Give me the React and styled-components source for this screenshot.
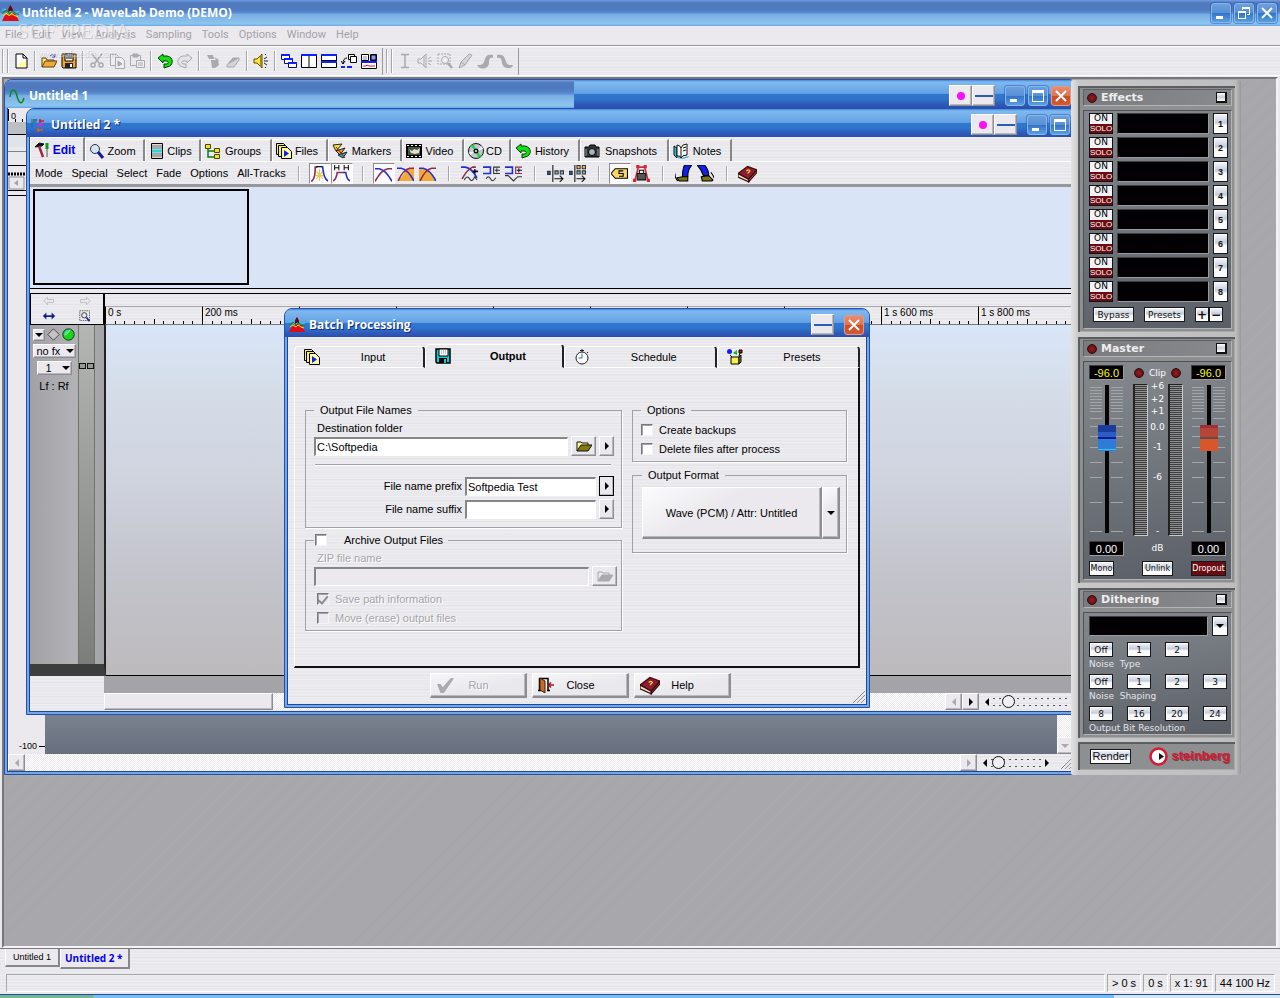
import styled, { createGlobalStyle, css } from "styled-components";

const GlobalStyle = createGlobalStyle`
    * { box-sizing: border-box; }

    html, body { margin: 0; }

    body {
        background: #ebe9ed;
        font-family: "Liberation Sans", Arial, sans-serif;
        font-size: 11px;
        line-height: 16px;
        color: #000;
    }

    button, input, select {
        font: inherit;
        color: inherit;
        margin: 0;
    }

    svg { display: block; flex: none; }
`;

const brushed = css`
    background-color: #e9e8ec;
    background-image:
        repeating-linear-gradient(0deg, rgba(255, 255, 255, 0.22) 0 1px, transparent 1px 3px),
        repeating-linear-gradient(0deg, rgba(190, 195, 210, 0.12) 0 1px, transparent 1px 7px);
`;

const activeBar = css`
    background: linear-gradient(#4a86da 0, #7cbaee 2px, #78b2ec 20%, #64a2e6 48%, #3078cc 50%, #2e74cc 68%, #2f58b8 88%, #2b50ac 100%);
`;

const inactiveBar = css`
    background: linear-gradient(#6f9ee0 0, #5078bc 3px, #507cc2 40%, #5a92d6 50%, #7aaee4 56%, #8cc6ee 92%, #6ba4e4 100%);
`;

const raised = css`
    border: 1px solid;
    border-color: #fff #8d8d92 #8d8d92 #fff;
    box-shadow: inset -1px -1px 0 #b9b8bd;
`;

const hatch = css`
    background: repeating-conic-gradient(#fff 0 25%, #ebe9ed 0 50%) 0 0 / 2px 2px;
`;

/* ---------- icons ---------- */

const G = "#a9a9ae";

const icons = {
    logo: <>
        <path d="M0 15L3 9L6 7V3L8 0L10 4V7L13 9L16 15Z" fill="#e00c1c" />
        <path d="M6 4L8 0L10 4V6H6Z" fill="#5c0a10" />
        <path d="M0 5L3 4L6 8L8 6L11 7L16 6" stroke="#2ce0e0" fill="none" />
        <path d="M0 8L4 5L7 8L10 6L13 8L16 9" stroke="#18803c" fill="none" />
        <path d="M1 10L4 8L7 10L9 8L12 10L15 11" stroke="#ffe000" fill="none" />
    </>,
    sine: <path d="M1 9C2 0 6 0 8 8S13 17 15 10" stroke="#0a8a1c" strokeWidth="1.5" fill="none" />,
    montage: <>
        <path d="M1 2v9M3 3h3M5 2v4" stroke="#2a5ab0" fill="none" />
        <path d="M3 2v4" stroke="#0a8a3c" strokeWidth="1.5" />
        <path d="M8 4h5M9 2v4" stroke="#e01030" strokeWidth="1.5" />
        <path d="M6 8h6M10 6v4" stroke="#d030d0" strokeWidth="1.5" />
        <path d="M6 13h6M7 11v4" stroke="#e06010" strokeWidth="1.5" />
    </>,
    page: <>
        <path d="M3 1h7l4 4v10H3z" fill="#fff" stroke="#000" />
        <path d="M5 12l8-5v7H5z" fill="#ffff9c" />
        <path d="M10 1v4h4" fill="none" stroke="#000" />
    </>,
    open: <>
        <path d="M1 14V5h4l1 2h7v2" fill="#ffe680" stroke="#5a4208" />
        <path d="M1 14l3-6h12l-3 6z" fill="#f2a93c" stroke="#5a4208" />
        <path d="M9 3q3-3 5 1M14 1v3h-3" fill="none" stroke="#2030c0" />
    </>,
    save: <>
        <path d="M1 1h14v14H2L1 14z" fill="#f0a830" stroke="#000" />
        <path d="M4 1h8v7H4z" fill="#fff" stroke="#000" />
        <path d="M5 3h6M5 5h6" stroke="#000" />
        <path d="M4 10h8v5H4z" fill="#222" />
        <path d="M9 11h2v3H9z" fill="#fff" />
    </>,
    cut: <g stroke={G} fill="none" strokeWidth="1.5">
        <path d="M3 1l7 9M13 1L6 10" /><circle cx="4" cy="12" r="2" /><circle cx="12" cy="12" r="2" />
    </g>,
    copy: <g stroke={G} fill="#efeef2">
        <path d="M1.5 1.5h6l2 2v9h-8z" /><path d="M6.5 4.5h6l3 3v8h-9z" /><path d="M9 8v5l4-2z" fill={G} />
    </g>,
    paste: <g stroke={G} fill="none">
        <path d="M1.5 2.5h10v10h-10z" /><path d="M4 1h5v3H4z" fill={G} /><path d="M7.5 7.5h8v7h-8z" fill="#efeef2" /><path d="M9 10h5M9 12h5" />
    </g>,
    undo: <path d="M1 5L6 1V3H10C17 4 17 13 10 14L7 15V11H9C12 11 12 8 9 8H6V10Z" fill="#12e012" stroke="#063c06" />,
    redo: <path d="M15 5L10 1V3H6C-1 4-1 13 6 14L9 15V11H7C4 11 4 8 7 8H10V10Z" fill="#e4e3e7" stroke={G} />,
    trash: <g fill={G}><path d="M2 2h6l1 4H4zM6 7h7l1 5-4 3H7z" /><path d="M9 4l5 3-2 2z" /></g>,
    eraser: <g stroke={G}><path d="M2 12L8 5h6L9 12z" fill={G} /><path d="M2 12v2h7l5-7V5" fill="#d4d3d8" /></g>,
    speaker: <>
        <path d="M1 6h3l5-5v14L4 10H1z" fill="#ffe838" stroke="#5a4a00" />
        <path d="M8 2v12" stroke="#a88410" strokeWidth="2" />
        <path d="M11 6l3-2M11 8h4M11 10l3 2M12 2l1-1M12 14l1 1" stroke="#222" fill="none" />
    </>,
    cascade: <g fill="#fff" stroke="#0a0a78">
        <path d="M.5 1.500h8v5h-8zM3.500 5.500h8v5h-8zM7.500 9.500h8v5h-8z" />
        <path d="M0 2h9M3 6h9M7 10h9" stroke="#1020ff" strokeWidth="2" />
    </g>,
    tileV: <g fill="#fff" stroke="#000"><path d="M.5 1.500h15v13h-15zM8 1v14" /><path d="M0 2h16" stroke="#1020ff" strokeWidth="2" /></g>,
    tileH: <g fill="#fff" stroke="#000"><path d="M.5 1.500h15v13h-15z" /><path d="M0 2h16M0 9h16" stroke="#1020ff" strokeWidth="2" /><path d="M0 7.500h16" /></g>,
    arrange: <g fill="#fff" stroke="#000">
        <path d="M7.500 1.500h6v5h-6z" /><path d="M9.500 3.500h6v6h-6z" />
        <path d="M6 5q-4 0-4 6M0 8l2 3 2-3" fill="none" /><path d="M0 14h4M6 14h5" stroke="#1020ff" strokeWidth="2" />
    </g>,
    map: <g fill="#fff" stroke="#000">
        <path d="M.5 1.500h7v6h-7zM9.500 1.500h6v6h-6zM.5 9.500h15v6H.5z" />
        <path d="M2 4h4M2 6h4" stroke="#888" /><path d="M10 2h5v5h-5z" fill="#80a0ff" /><path d="M0 9h16" stroke="#1020ff" strokeWidth="2" />
        <path d="M2 13h3l1-1 2 1h6" stroke="#e01020" fill="none" />
    </g>,
    ibeam: <path d="M4 1.500h3l1 1 1-1h3M8 2v12M4 14.500h3l1-1 1 1h3" stroke={G} fill="none" strokeWidth="1.500" />,
    speakerOff: <g stroke={G} fill="none"><path d="M1 6h3l5-5v14L4 10H1z" /><path d="M7 3v10M11 6l3-2M11 8h4M11 10l3 2" /></g>,
    zoomOff: <g stroke={G} fill="none"><path d="M1 1h12v10H1z" strokeDasharray="2 1" /><circle cx="8" cy="7" r="3.500" fill="#efeef2" /><path d="M11 10l4 5" strokeWidth="2.500" /></g>,
    pencil: <g stroke={G} fill="#d4d3d8"><path d="M2 15l2-6L12 1l3 1-7 10z" /><path d="M4 9l4 3" /></g>,
    fadeIn: <path d="M0 12h3c3 0 4-3 5-6 1-4 4-5 8-4v3c-4-1-4 2-4 5 0 6-9 8-12 2z" fill={G} />,
    fadeOut: <path d="M0 2c4-1 7 0 8 4 1 3 2 6 5 6h3c-1 5-10 4-11-2 0-3-1-6-5-5z" fill={G} />,

    tools: <>
        <path d="M1 5l4-4 5 1-2 2z" fill="#111" stroke="#111" /><path d="M5 4l4 11" stroke="#a02840" strokeWidth="2.500" />
        <path d="M13 1v6" stroke="#0c9c1c" strokeWidth="3" /><path d="M13 7v8" stroke="#555" />
    </>,
    lens: <><circle cx="6" cy="6" r="4.500" fill="#cfe4f4" stroke="#333" /><path d="M9 9l5 6" stroke="#181890" strokeWidth="3" /></>,
    clips: <><path d="M2.500.5h11v15h-11z" fill="#d8dcdc" stroke="#000" /><path d="M3 3h10M3 5h10M3 11h10M3 13h10" stroke="#777" /><path d="M3 8h10" stroke="#28d8e0" strokeWidth="3" /></>,
    tree: <g fill="#f4e424" stroke="#4a4400">
        <path d="M3 4v10h7M3 8h7" stroke="#0a7c1c" fill="none" strokeWidth="1.500" />
        <path d="M.5 1.500h5v4h-5zM9.500 5.500h5v4h-5zM9.500 11.500h5v4h-5z" />
    </g>,
    files: <g stroke="#000" fill="#f8f05a">
        <path d="M.5.5h7l2 2v9h-9z" /><path d="M2.500 2.500h7l2 2v9h-9z" /><path d="M5.500 4.500h6l4 4v7h-10z" fill="#fffca0" />
        <path d="M8 7v7l5-3.500z" fill="#1020f0" stroke="none" />
    </g>,
    markers: <>
        <path d="M1 2l9-1-6 7z" fill="#ffec20" stroke="#222" /><path d="M4 8l9-3-5 7z" fill="#f0a020" stroke="#222" /><path d="M6 12l9-3-4 6z" fill="#20b8c8" stroke="#222" /><path d="M4 4l9 11" stroke="#901818" />
    </>,
    video: <>
        <path d="M0 1h16v14H0z" fill="#000" /><path d="M1 2.500h15M1 13.500h15" stroke="#fff" strokeDasharray="2 2" />
        <path d="M2 4h12v8H2z" fill="#3c5a38" /><path d="M3 6l3 2 2-2 3 1 3-2-1 5-4 1-4-1z" fill="#e8d8d0" />
    </>,
    cd: <>
        <circle cx="8" cy="8" r="7.500" fill="#c4c6ca" stroke="#111" /><path d="M8 8L2 3l4-2zM8 8l6 5-4 2z" fill="#24d84c" /><path d="M8 8l6-5 1 3zM8 8l-7 1 1 3z" fill="#e8f4f8" />
        <circle cx="8" cy="8" r="2.500" fill="#111" /><circle cx="8" cy="8" r="1" fill="#fff" />
    </>,
    camera: <>
        <path d="M1 4h4l1-2h5l1 2h3v10H1z" fill="#333" stroke="#000" /><circle cx="8" cy="9" r="3.500" fill="#a8b4bc" stroke="#000" /><path d="M2 6v7M14 6v7" stroke="#999" />
    </>,
    notes: <>
        <path d="M1 3l3 2v10l-3-3z" fill="#38b8d0" stroke="#111" /><path d="M4 13l5 2 6-2 1 1-6 2-6-1z" fill="#38b8d0" /><path d="M4 2q3 0 4 3 1-4 6-4v11q-5 0-6 3-1-3-4-2z" fill="#fff" stroke="#111" /><path d="M8 5v10M10 5l3-1M10 8l3-1" stroke="#111" />
    </>,
    envelope: <><path d="M5 6l6 7M11 6l-6 7M8 4v11M4 10h8" stroke="#f0c848" /><path d="M0 15h1Q4 12 4 2h2" stroke="#8c2c50" fill="none" strokeWidth="1.500" /><path d="M5 1.500h6" stroke="#111" /><path d="M10 2h1q1 11 5 13" stroke="#2030d8" fill="none" strokeWidth="1.500" /></>,
    trim: <><path d="M1.500 0v5M5.500 0v5M1 2.500h5M10.500 0v5M14.500 0v5M10 2.500h5" stroke="#111" fill="none" /><path d="M0 15q3-1 4-8h7" stroke="#8c2c50" fill="none" strokeWidth="1.500" /><path d="M10 7h2q1 7 4 8" stroke="#2030d8" fill="none" strokeWidth="1.500" /></>,
    cross1: <><path d="M0 3.500h4q6 1 12 12" stroke="#2030d8" fill="none" strokeWidth="1.500" /><path d="M16 3.500h-4q-6 1-12 12" stroke="#8c2c50" fill="none" strokeWidth="1.500" /></>,
    cross2: <><path d="M8 5l8-3v13H1q4-3 7-10z" fill="#f4a838" /><path d="M0 3h4q6 1 12 12" stroke="#2030d8" fill="none" strokeWidth="1.500" /><path d="M16 3h-4Q6 4 1 15" stroke="#8c2c50" fill="none" strokeWidth="1.500" /></>,
    cross3: <><path d="M0 15V3q5 0 8 2l8 10z" fill="#f4a838" /><path d="M0 3h4q6 1 12 12" stroke="#2030d8" fill="none" strokeWidth="1.500" /><path d="M16 3h-4Q6 4 1 15" stroke="#8c2c50" fill="none" strokeWidth="1.500" /></>,
    wave1: <><path d="M0 2h4q6 1 11 10" stroke="#2030d8" fill="none" strokeWidth="1.500" /><path d="M14 2h-3Q6 4 1 13" stroke="#8c2c50" fill="none" strokeWidth="1.500" /><path d="M3 14q3-5 5-1t5-2l2 3" stroke="#333" fill="none" /><path d="M16 6h-5M13 4v4" stroke="#111" strokeWidth="1.500" /></>,
    wave2: <><path d="M0 2h7v6H0" stroke="#2030d8" fill="none" strokeWidth="1.500" /><path d="M16 2h-6v6h6M11 5h5M13 3v4" stroke="#333" fill="none" /><path d="M3 13q2-4 4 0t5-1" stroke="#333" fill="none" /></>,
    wave3: <><path d="M0 2h7v6H0" stroke="#2030d8" fill="none" strokeWidth="1.500" /><path d="M16 2h-6v6h6" stroke="#8c2c50" fill="none" /><path d="M11 5h5M13 3v4" stroke="#111" /><path d="M0 10h3l5 5 4-4h4" stroke="#333" fill="none" /></>,
    shift1: <><path d="M5.500 0v16" stroke="#111" /><path d="M0 6h3v3H0z" fill="#2a5a90" stroke="#234" /><path d="M7.500 5.500h3v3h-3zM12.500 5.500h3v3h-3z" fill="#8cb8e0" stroke="#333" /><path d="M7 13h8M12 10l3 3-3 3" stroke="#111" fill="none" /></>,
    shift2: <><path d="M5.500 0v16" stroke="#111" /><path d="M0 6h3v3H0z" fill="#2a5a90" stroke="#234" /><path d="M7.500.5h3v3h-3zM12.500.5h3v3h-3z" fill="#f4b848" stroke="#333" /><path d="M7.500 5.500h3v3h-3zM12.500 5.500h3v3h-3z" fill="#8cb8e0" stroke="#333" /><path d="M7 13h8M12 10l3 3-3 3" stroke="#111" fill="none" /></>,
    tag: <><path d="M0 8l4-4.500h11.500v9H4z" fill="#f8d868" stroke="#000" /><path d="M11.500 5.500h-4v2.500h4v2.500h-4" stroke="#000" fill="none" /></>,
    lock: <><path d="M2 14L5 2h6l3 12" stroke="#d02838" fill="none" strokeWidth="1.500" /><path d="M3 0h3v3H3zM10 0h3v3h-3zM0 13h3v3H0zM13 13h3v3h-3z" fill="#d02838" /><path d="M4 8h8v6H4z" fill="#555" stroke="#111" /><path d="M6 8V5h4v3" stroke="#111" fill="none" /></>,
    legL: <><path d="M9 0h7q-4 4-4 11H7q0-7 2-11z" fill="#1020e8" stroke="#000" /><path d="M2 12l5-1h5v4H4z" fill="#7c7418" stroke="#000" /><path d="M0 8q0 5 3 7" stroke="#000" fill="none" /></>,
    legR: <><path d="M0 0h7q4 4 4 10H6Q4 4 0 0z" fill="#1020e8" stroke="#000" /><path d="M4 11l7-1 4 4-1 1H5z" fill="#7c7418" stroke="#000" /><path d="M13 7q2 2 3 5" stroke="#000" fill="none" /></>,
    book: <>
        <path d="M0 8L8 2l8 3-7 8z" fill="#8c1c30" stroke="#3c0810" /><path d="M0 8v3l9 4v-2z" fill="#f4e8c0" stroke="#3c0810" /><path d="M9 13v2l7-8V5z" fill="#c88c30" stroke="#3c0810" />
        <path d="M7 6q2-2 3 0l-2 2" stroke="#f8d030" fill="none" />
    </>,

    floppy: <><path d="M1 1h14v14H2L1 14z" fill="#18c8d0" stroke="#000" strokeWidth="1.500" /><path d="M4 1h9v7H4z" fill="#fff" stroke="#000" /><path d="M6 3h5M6 5h5" stroke="#888" strokeDasharray="1 1" /><path d="M4 10h8v5H4z" fill="#000" /><path d="M9 11h2v4H9z" fill="#18c8d0" /></>,
    clock: <><circle cx="8" cy="9" r="6" fill="#fff" stroke="#222" /><path d="M8 4.500V9H4.500" stroke="#2870b0" fill="none" /><path d="M6 1.500h4M8 0v3M13 3l1 1" stroke="#222" /></>,
    presets: <>
        <path d="M4 8h8v7H4z" fill="#f4f050" stroke="#000" /><path d="M12 8l2-2v7l-2 2z" fill="#a09820" stroke="#000" /><path d="M3 6l2 2M13 4l-1 3" stroke="#000" />
        <circle cx="2.500" cy="2.500" r="2.500" fill="#1020f0" /><path d="M6 4l4-3v5z" fill="#10b820" /><path d="M12 1h3v3h-3z" fill="#d01020" stroke="#000" />
    </>,
    folder: <><path d="M1 13V4h4l1 1h6v3" fill="#fdfb90" stroke="#111" /><path d="M1 13l4-6h11l-4 6z" fill="#857a10" stroke="#111" /></>,
    folderOff: <><path d="M1 13V4h4l1 1h6v3" fill="#e9e8ec" stroke={G} /><path d="M1 13l4-6h11l-4 6z" fill={G} stroke={G} /></>,
    tick: <path d="M1 7h3l2 3 7-8h3L7 15H4z" fill={G} />,
    door: <><path d="M1.500 1v13M1 1.500h9v12M9 13.500h3M0 13.500h3" stroke="#000" fill="none" strokeWidth="1.500" /><path d="M2 1l5 3v12l-5-3z" fill="#c86c20" stroke="#402008" /><path d="M16 8h-5M13 5.500L10.500 8l2.500 2.500" stroke="#a01828" fill="none" strokeWidth="1.500" /></>,
    arrL: <path d="M1 8l5-5v3h8v4H6v3z" fill="none" stroke="#b4b4b8" />,
    arrR: <path d="M15 8l-5-5v3H2v4h8v3z" fill="none" stroke="#b4b4b8" />,
    spread: <path d="M1 8l4-4v3h6V4l4 4-4 4V9H5v3z" fill="#10208c" />,
    zoomSel: <><path d="M1 1h13v13H1z" stroke="#444" strokeDasharray="2 1" fill="none" /><circle cx="7" cy="7" r="3.500" fill="#dfe8f4" stroke="#111" /><path d="M10 10l4 5" stroke="#182898" strokeWidth="2.500" /></>,
    diamond: <path d="M8 1l7 7-7 7-7-7z" fill="#c4c4c4" stroke="#333" />,
    ball: <><circle cx="8" cy="8" r="7" fill="#14d81c" stroke="#111" /><path d="M3 7q1-5 6-5-1 4-6 7z" fill="#2ce0e8" /><path d="M3 9q4-1 7-7" stroke="#f8e820" fill="none" /></>,
};

const Icon = ({ name, size = 16 }) => (
    <svg width={size} height={size} viewBox="0 0 16 16" aria-hidden="true">{icons[name]}</svg>
);

const Arrow = ({ dir, color = "#000" }) => {
    const d = { left: "M6 0v8L2 4z", right: "M2 0v8l4-4z", down: "M0 2h8L4 6z" }[dir];
    return <svg width="8" height="8" viewBox="0 0 8 8" aria-hidden="true"><path d={d} fill={color} /></svg>;
};

const Grip = () => (
    <svg width="12" height="12" viewBox="0 0 12 12" aria-hidden="true">
        <path d="M0 12L12 0M4 12l8-8M8 12l4-4" stroke="#8d8d92" />
    </svg>
);

/* ---------- application frame ---------- */

const Shell = styled.div`
    min-height: 100vh;
    display: flex;
    flex-direction: column;
    position: relative;
    overflow: hidden;
`;

const AppTitle = styled.header`
    ${inactiveBar}
    height: 26px;
    display: flex;
    align-items: center;
    gap: 3px;
    padding: 0 3px 0 2px;
`;

const TitleText = styled.h1`
    flex: 1;
    margin: 0;
    font-family: "Open Sans", "Noto Sans", sans-serif;
    font-size: 12px;
    line-height: 18px;
    font-weight: 700;
    color: #fff;
    white-space: nowrap;
    text-shadow: ${(props) => (props.$active ? "1px 1px 0 #142c80" : "none")};
`;

const Watermark = styled.div`
    position: absolute;
    left: 17px;
    top: 20px;
    z-index: 3;
    width: 140px;
    pointer-events: none;
    color: rgba(255, 255, 255, 0.5);
    font-family: "Liberation Serif", serif;
    font-size: 21px;
    line-height: 22px;
    text-shadow: 1px 1px 0 rgba(130, 130, 135, 0.35);
`;

const WatermarkUrl = styled.div`
    font-family: "Liberation Sans", sans-serif;
    font-size: 9px;
    line-height: 12px;
    padding: 6px 0 0 21px;
`;

const MenuBar = styled.nav`
    height: 20px;
    display: flex;
    align-items: center;
    gap: 10px;
    padding: 0 5px 1px;
    background: #ebe9ed;
    border-bottom: 1px solid #98979b;
`;

const MenuItem = styled.button`
    border: 0;
    padding: 0;
    background: none;
    font-family: ${(props) => (props.$small ? "inherit" : 'Roboto, "Liberation Sans", sans-serif')};
    color: ${(props) => (props.disabled ? "#a2a1a6" : "#000")};
`;

const ToolBar = styled.div`
    ${brushed}
    height: 30px;
    display: flex;
    align-items: center;
    border-top: 1px solid #fff;
    border-bottom: 1px solid #fff;
    padding-left: 2px;
`;

const ToolGroup = styled.div`
    height: 27px;
    display: flex;
    align-items: center;
    padding-right: 3px;
    margin-right: 3px;
    border-right: 1px solid #98979b;
`;

const Handle = styled.span`
    width: 6px;
    height: 24px;
    margin-right: 3px;
    border: solid #a6a5aa;
    border-width: 0 1px;
    box-shadow: inset 1px 0 0 #fff, 1px 0 0 #fff;
`;

const ToolButton = styled.button`
    width: ${(props) => (props.$wide ? 22 : 20)}px;
    height: ${(props) => (props.$wide ? 21 : 22)}px;
    display: grid;
    place-items: center;
    padding: 0;
    border: 1px solid;
    border-color: ${(props) => (props.$on ? "#8d8d92 #fff #fff #8d8d92" : "transparent")};
    background: ${(props) => (props.$on ? "#fafafc" : "none")};
`;

const Divider = styled.span`
    width: 2px;
    height: ${(props) => props.$h || 20}px;
    margin: 0 ${(props) => props.$m || 3}px;
    border-left: 1px solid #a6a5aa;
    border-right: 1px solid #fff;
`;

const Workspace = styled.main`
    flex: 1;
    position: relative;
    overflow: hidden;
    margin: 1px 2px 0 2px;
    border: 2px solid;
    border-color: #77777c #f4f4f6 #f4f4f6 #77777c;
    background: repeating-linear-gradient(135deg, #a8a8ac 0 5px, #a6a6aa 5px 6px, #a8a8ac 6px 11px, #aaaaae 11px 12px);
`;

const DocTabs = styled.div`
    ${brushed}
    height: 24px;
    display: flex;
    align-items: flex-start;
    padding-left: 5px;
    border-top: 1px solid #77777c;
`;

const DocTab = styled.button`
    height: ${(props) => (props.$active ? 20 : 18)}px;
    padding: ${(props) => (props.$active ? "0 5px 0 4px" : "0 7px")};
    border: 0;
    border-left: 1px solid #fff;
    border-right: 2px solid #88888c;
    border-bottom: 2px solid #88888c;
    background: #ebe9ed;
    font-family: ${(props) => (props.$active ? '"Open Sans", sans-serif' : "inherit")};
    font-size: ${(props) => (props.$active ? 10 : 9)}px;
    font-weight: ${(props) => (props.$active ? 700 : 400)};
    color: ${(props) => (props.$active ? "#0000f0" : "#000")};
`;

const StatusBar = styled.footer`
    ${brushed}
    height: 22px;
    display: flex;
    gap: 2px;
    padding: 2px 5px 2px 6px;
`;

const StatusCell = styled.span`
    flex: ${(props) => (props.$fill ? 1 : "none")};
    padding: 0 4px;
    line-height: 16px;
    border: 1px solid;
    border-color: #a6a5aa #fff #fff #a6a5aa;
`;

const TaskEdge = styled.div`
    height: 4px;
    border-top: 1px solid #2048b0;
    background: linear-gradient(90deg, #78b888 0 93px, #7cbcf0 94px 87%, #d8e4f4 87%);
`;

/* ---------- document windows ---------- */

const Frame = styled.section`
    position: absolute;
    left: ${(props) => props.$x}px;
    top: ${(props) => props.$y}px;
    width: ${(props) => props.$w}px;
    height: ${(props) => props.$h}px;
    display: flex;
    flex-direction: column;
    padding: 0 2px 2px;
    border: 1px solid #2450b0;
    border-radius: 8px 8px 0 0;
    background: #74a8e4;
    overflow: hidden;
`;

const FrameTitle = styled.div`
    ${activeBar}
    ${(props) => props.$half && css`
        &::before {
            content: "";
            position: absolute;
            left: 0;
            top: 0;
            width: 569px;
            height: 28px;
            ${inactiveBar}
        }
    `}
    height: 28px;
    flex: none;
    margin: 0 -2px;
    display: flex;
    align-items: center;
    gap: 4px;
    padding: 3px 5px 0 4px;

    > * { position: relative; }
`;

const FrameBody = styled.div`
    flex: 1;
    min-height: 0;
    display: flex;
    flex-direction: column;
    border: 1px solid #1e469c;
    border-top: 0;
    ${brushed}
`;

const CtlButton = styled.button`
    width: 20px;
    height: 20px;
    display: grid;
    place-items: center;
    padding: 0;
    border: 1px solid ${(props) => (props.$close ? "#e89880" : "#86b8ee")};
    border-radius: 3px;
    box-shadow: ${(props) => (props.$close ? "none" : "0 0 0 1px rgba(40, 84, 170, 0.5)")};
    background: ${(props) => (props.$close
        ? "linear-gradient(#e88c70, #dc7454 48%, #cc4c24 52%, #d05c34)"
        : "linear-gradient(#6ca0dc, #5890d6 48%, #3474c8 52%, #58a0e0)")};
`;

const Controls = styled.div`
    display: flex;
    gap: 3px;
`;

const Pins = styled.div`
    display: flex;
    margin-right: 6px;
`;

const PinButton = styled.button`
    ${raised}
    width: 23px;
    height: 21px;
    display: grid;
    place-items: center;
    padding: 0;
    background: #ebe9ed;
`;

const glyphs = {
    Minimize: <path d="M4 12h7v3H4z" fill="#fff" />,
    Maximize: <path d="M3 3h12v12H3zM4 6v8h10V6z" fill="#fff" fillRule="evenodd" />,
    Restore: <path d="M7 3h8v8h-3v-1h2V5H8v1H7zM3 7h8v8H3zM4 9v5h6V9z" fill="#fff" fillRule="evenodd" />,
    Close: <path d="M4 4l10 10M14 4L4 14" stroke="#fff" strokeWidth="2" />,
};

const Ctl = ({ kind, red }) => (
    <CtlButton type="button" aria-label={kind} $close={red}>
        <svg width="18" height="18" viewBox="0 0 18 18">{glyphs[kind]}</svg>
    </CtlButton>
);

const DotPin = () => (
    <PinButton type="button" aria-label="Group">
        <svg width="8" height="8"><circle cx="4" cy="4" r="4" fill="#f810f8" /></svg>
    </PinButton>
);

const RollPin = () => (
    <PinButton type="button" aria-label="Roll up">
        <svg width="18" height="2"><path d="M0 0h18v2H0z" fill="#2c5cb4" /></svg>
    </PinButton>
);

const ScrollRow = styled.div`
    height: 17px;
    flex: none;
    display: flex;
    align-items: center;
`;

const ScrollTrack = styled.div`
    ${hatch}
    flex: 1;
    height: 17px;
    display: flex;
`;

const ScrollThumb = styled.div`
    ${raised}
    width: 169px;
    background: #ebe9ed;
`;

const ScrollButton = styled.button`
    ${raised}
    width: 17px;
    height: 17px;
    display: grid;
    place-items: center;
    padding: 0;
    background: #ebe9ed;
`;

const ZoomBox = styled.div`
    display: flex;
    align-items: center;
    width: ${(props) => props.$w}px;
    padding-left: 4px;
    padding-right: ${(props) => props.$pr || 0}px;
`;

const ZoomRange = styled.input`
    appearance: none;
    flex: 1;
    min-width: 0;
    height: 14px;
    background: radial-gradient(circle, #555 1px, transparent 1px) 0 0 / 6px 7px;

    &::-webkit-slider-thumb {
        appearance: none;
        width: 13px;
        height: 13px;
        border: 1px solid #111;
        border-radius: 50%;
        background: #f0f0f2;
    }
`;

/* first document */

const WaveOverview = styled.div`
    height: 88px;
    flex: none;
    background: #ebe9ed;
`;

const WaveMain = styled.div`
    flex: 1;
    display: flex;
`;

const AmpScale = styled.div`
    width: 37px;
    display: flex;
    align-items: flex-end;
    justify-content: flex-end;
    gap: 2px;
    font-size: 9px;
    background: #ebe9ed;

    &::after {
        content: "";
        width: 6px;
        margin-bottom: 7px;
        border-top: 1px solid #000;
    }
`;

const WaveCanvas = styled.div`
    flex: 1;
    background: linear-gradient(#8a9098, #7c8490 92%, #687080);
`;

const VScroll = styled.div`
    ${hatch}
    width: 16px;
    display: flex;
    align-items: flex-end;
`;

/* second document */

const EditTabs = styled.div`
    height: 25px;
    flex: none;
    display: flex;
    align-items: flex-end;
    border-bottom: 1px solid #fff;
`;

const EditTab = styled.button`
    width: ${(props) => props.$w}px;
    height: ${(props) => (props.$active ? 24 : 22)}px;
    display: flex;
    align-items: center;
    padding: 0 0 0 3px;
    border: 0;
    border-top: 1px solid #fff;
    border-right: 2px solid #88888c;
    border-left: 1px solid #fff;
    background: none;
    font-size: ${(props) => (props.$active ? 12 : 11)}px;
    font-weight: ${(props) => (props.$active ? 700 : 400)};
    color: ${(props) => (props.$active ? "#0000f0" : "#000")};

    span { flex: 1; text-align: center; padding-right: 5px; }
`;

const EditMenu = styled.div`
    height: 25px;
    flex: none;
    display: flex;
    align-items: center;
    padding-left: 5px;
    border-bottom: 3px solid #98989c;
`;

const MenuWords = styled.div`
    display: flex;
    gap: 9px;
    margin-right: 3px;
`;

const Overview = styled.div`
    height: 102px;
    flex: none;
    padding: 2px 3px;
    background: #d9e4f6;
    border-bottom: 1px solid #000;
`;

const OverviewRange = styled.div`
    width: 216px;
    height: 96px;
    border: 2px solid #000;
`;

const Splitter = styled.div`
    height: 5px;
    flex: none;
    border-bottom: 1px solid #000;
`;

const RulerRow = styled.div`
    height: 31px;
    flex: none;
    display: flex;
`;

const RulerTools = styled.div`
    width: 75px;
    display: grid;
    grid-template-columns: 1fr 1fr;
    place-items: center;
    border: solid #000;
    border-width: 0 2px 1px 1px;
`;

const Ruler = styled.div`
    flex: 1;
    display: flex;
    overflow: hidden;
    padding-top: 12px;
`;

const RulerPart = styled.div`
    flex: 0 0 97px;
    display: flex;
    flex-direction: column;
    justify-content: space-between;
    border-top: 1px solid #a6a5aa;
    border-bottom: 1px solid #77777c;
    border-left: 1px solid #000;
    padding-left: 2px;
    font-size: 10px;
    line-height: 12px;
`;

const Ticks = () => (
    <svg width="94" height="5" viewBox="0 0 94 5" aria-hidden="true">
        {[1, 2, 3, 4, 5, 6, 7, 8, 9].map((n) => (
            <path key={n} d={`M${Math.round(n * 9.7) - 3}.5 5V${n === 5 ? 0 : 2}`} stroke="#000" />
        ))}
    </svg>
);

const TrackRow = styled.div`
    flex: 1;
    display: flex;
`;

const TrackHead = styled.div`
    width: 76px;
    display: flex;
    background: linear-gradient(90deg, #a2a2a6, #b2b2b6 60%, #a4a4a8);
    border-right: 2px solid #222;
    border-bottom: 12px solid #3c3e3e;
`;

const TrackControls = styled.div`
    width: 48px;
    display: flex;
    flex-direction: column;
    align-items: center;
    gap: 3px;
    padding-top: 3px;
`;

const TrackIcons = styled.div`
    display: flex;
    align-items: center;
    gap: 2px;
`;

const SmallTrackButton = styled.button`
    ${raised}
    width: 12px;
    height: 12px;
    display: grid;
    place-items: center;
    padding: 0;
    background: #ebe9ed;
`;

const PickBox = styled.label`
    position: relative;
    width: ${(props) => props.$w}px;
    height: 14px;
    display: flex;

    svg { position: absolute; right: 2px; top: 3px; pointer-events: none; }
`;

const Pick = styled.select`
    ${raised}
    appearance: none;
    width: 100%;
    padding: 0 3px;
    line-height: 12px;
    border-radius: 0;
    background: #ebe9ed;
    text-indent: ${(props) => props.$indent || 0}px;
`;

const MeterPair = styled.div`
    width: 17px;
    display: flex;
    justify-content: center;
    padding-top: 38px;
    background: linear-gradient(#b4b6b4, #7c7e7c);
    border: solid #70746f;
    border-width: 0 1px;
    gap: 1px;

    i {
        width: 7px;
        height: 6px;
        border: 1px solid #111;
        background: #999;
        flex: none;
    }
`;

const TrackCanvas = styled.div`
    flex: 1;
    background: linear-gradient(#d9e6f8, #d5dde9 18%, #cfd3de 45%, #c3c4cc 70%, #bdbabd);
    border-bottom: 1px solid #000;
`;

const Footer = styled.div`
    height: 35px;
    flex: none;
    padding-left: 74px;
`;

const FooterStrip = styled.div`
    height: 17px;
    background: #a4a4a8;
`;

/* ---------- batch dialog ---------- */

const Tabs = styled.div`
    height: 31px;
    flex: none;
    display: flex;
    align-items: flex-end;
    padding: 0 6px;
`;

const Tab = styled.button`
    flex: ${(props) => props.$w} 1 0;
    height: ${(props) => (props.$active ? 24 : 22)}px;
    display: flex;
    align-items: center;
    padding: 0 0 0 9px;
    border: 0;
    border-top: 1px solid #fff;
    border-left: 1px solid #fff;
    border-right: 2px solid #222;
    border-bottom: 1px solid ${(props) => (props.$active ? "transparent" : "#fff")};
    border-radius: 5px 4px 0 0;
    background: none;
    font-weight: ${(props) => (props.$active ? 700 : 400)};

    span { flex: 1; padding-left: 3px; text-align: center; }
`;

const Panel = styled.form`
    height: 300px;
    flex: none;
    display: grid;
    grid-template-columns: 317px 215px;
    gap: 10px;
    margin: 0 6px;
    padding: 34px 10px 0 10px;
    border: 1px solid #fff;
    border-top: 0;
    border-right: 2px solid #111;
    border-bottom: 2px solid #111;
`;

const Column = styled.div`
    display: flex;
    flex-direction: column;
    gap: ${(props) => props.$gap}px;
`;

const Group = styled.fieldset`
    margin: 0;
    min-width: 0;
    height: ${(props) => props.$h}px;
    padding: ${(props) => props.$pad || "2px 7px 0 8px"};
    border: 1px solid #a2a1a6;
    box-shadow: 1px 1px 0 #fff;
`;

const Legend = styled.legend`
    padding: ${(props) => (props.$tight ? "0 5px 0 1px" : "0 6px")};
    height: 16px;
`;

const CheckLabel = styled.label`
    display: flex;
    align-items: center;
    gap: ${(props) => props.$gap || 6}px;
    height: ${(props) => props.$h || 19}px;
    ${(props) => props.$off && "color: #a5a4a9; text-shadow: 1px 1px 0 #fff;"}
`;

const Check = styled.input`
    appearance: none;
    flex: none;
    width: 12px;
    height: 12px;
    display: grid;
    place-items: center;
    border: 1px solid;
    border-color: #77777c #f4f4f6 #f4f4f6 #77777c;
    box-shadow: inset 1px 1px 0 #a6a5aa;
    background: ${(props) => (props.disabled ? "#ebe9ed" : "#fff")};

    &:checked::after {
        content: "";
        width: 4px;
        height: 8px;
        border: solid #8d8d92;
        border-width: 0 2px 2px 0;
        transform: rotate(40deg);
    }
`;

const FieldLabel = styled.label`
    display: block;
    padding-left: 3px;
    line-height: 15px;
    ${(props) => props.$off && "color: #a5a4a9; text-shadow: 1px 1px 0 #fff;"}
`;

const FieldRow = styled.div`
    display: flex;
    align-items: center;
    gap: 3px;
    height: 20px;
    margin-bottom: ${(props) => props.$mb || 0}px;

    > label { flex: 1; text-align: right; }
`;

const TextBox = styled.input`
    width: ${(props) => (props.$w ? `${props.$w}px` : "auto")};
    flex: ${(props) => (props.$w ? "none" : "1")};
    min-width: 0;
    height: 19px;
    padding: 0 1px;
    border: solid;
    border-width: 2px 1px 1px 2px;
    border-color: #85858a #fff #fff #85858a;
    background: ${(props) => (props.disabled ? "#ebe9ed" : "#fff")};
`;

const SmallButton = styled.button`
    ${raised}
    width: ${(props) => props.$w}px;
    height: 20px;
    display: grid;
    place-items: center;
    padding: 0;
    background: #ebe9ed;
    outline: ${(props) => (props.$focus ? "1px solid #000" : "none")};
    outline-offset: -1px;
`;

const Rule = styled.hr`
    width: auto;
    margin: 8px 3px 10px 1px;
    border: 0;
    border-top: 1px solid #a2a1a6;
    border-bottom: 1px solid #fff;
`;

const Indent = styled.div`
    padding: 3px 0 0 3px;
`;

const FormatRow = styled.div`
    display: flex;
    height: 52px;
`;

const FormatButton = styled.button`
    ${raised}
    flex: ${(props) => (props.$arrow ? "0 0 18px" : "1")};
    display: grid;
    place-items: center;
    padding: 0;
    border-right-width: 2px;
    border-bottom-width: 2px;
    background: linear-gradient(150deg, #fbfbfc, #ebe9ed 40%);
`;

const Actions = styled.div`
    flex: 1;
    display: flex;
    justify-content: center;
    gap: 5px;
    padding: 5px 0 0 6px;
`;

const ActionButton = styled.button`
    ${raised}
    width: 97px;
    height: 25px;
    display: grid;
    grid-template-columns: 18px 1fr 16px;
    align-items: center;
    padding: 0 5px;
    border-right-width: 2px;
    border-bottom-width: 2px;
    background: linear-gradient(170deg, #f6f6f8, #e9e8ec 60%);
    color: ${(props) => (props.disabled ? "#a5a4a9" : "#000")};
    text-shadow: ${(props) => (props.disabled ? "1px 1px 0 #fff" : "none")};
`;

const Corner = styled.div`
    position: absolute;
    right: 4px;
    bottom: 4px;
`;

/* ---------- master rack ---------- */

const Rack = styled.aside`
    position: absolute;
    left: 1067px;
    top: 1px;
    width: 170px;
    padding: 6px 6px 5px 7px;
    display: flex;
    flex-direction: column;
    gap: 5px;
    background: linear-gradient(90deg, #e2e2e2, #c8c8c8 8px, #bdbdbf 97%, #98989c);
    border-radius: 2px;
    font-family: "DejaVu Sans", Verdana, sans-serif;
    font-size: 9px;
    line-height: 12px;
`;

const Module = styled.section`
    padding: 3px 3px 3px 5px;
    display: flex;
    flex-direction: column;
    gap: 4px;
    background: #8e8f90;
    box-shadow: inset 2px 2px 0 #5c5d60, inset -1px -1px 0 #a8a8a8;
`;

const ModuleHead = styled.div`
    height: 17px;
    display: flex;
    align-items: center;
    gap: 4px;
    padding: 0 4px 0 3px;
    background: linear-gradient(90deg, #7b7c80, #87898c);
    border: 1px solid;
    border-color: #5f6064 #b4b4b4 #b4b4b4 #5f6064;

    h2 {
        flex: 1;
        margin: 0;
        font-size: 11px;
        font-weight: 700;
        color: #eee;
    }
`;

const Fold = styled.button`
    width: 11px;
    height: 11px;
    padding: 0;
    border: 1px solid #111;
    border-width: 1px 2px 2px 1px;
    background: linear-gradient(#fff, #c8ccd4 50%, #fff);
`;

const Led = styled.i`
    width: 10px;
    height: 10px;
    border-radius: 50%;
    border: 1px solid #2a1010;
    background: radial-gradient(#a01820, #500c10);
`;

const ModuleBody = styled.div`
    height: ${(props) => props.$h}px;
    display: flex;
    flex-direction: column;
    padding: 2px 3px 0 5px;
    background: linear-gradient(170deg, #85898d, #70757c 50%, #5a5e66);
    border: 1px solid;
    border-color: #4e5054 #b4b4b4 #b4b4b4 #4e5054;
`;

const Slot = styled.div`
    height: 21px;
    margin-bottom: 3px;
    display: grid;
    grid-template-columns: 24px 1fr 15px;
    gap: 4px;
`;

const SlotButtons = styled.div`
    display: flex;
    flex-direction: column;
    border: 1px solid #111;
`;

const SlotKey = styled.button`
    flex: 1;
    padding: 0;
    border: 0;
    font-family: ${(props) => (props.$solo ? '"Liberation Sans", sans-serif' : "inherit")};
    font-size: ${(props) => (props.$solo ? 8 : 9)}px;
    line-height: 9px;
    background: ${(props) => (props.$solo ? "#6c0c10" : "#f0f2f6")};
    color: ${(props) => (props.$solo ? "#fff" : "#000")};
`;

const Screen = styled.output`
    display: block;
    flex: ${(props) => (props.$grow ? 1 : "none")};
    background: #020003;
    border: 1px solid;
    border-color: #3c3e42 #9a9c9e #9a9c9e #3c3e42;
    height: ${(props) => (props.$h ? `${props.$h}px` : "auto")};
    font-family: "Liberation Sans", sans-serif;
    font-size: 11px;
    line-height: 14px;
    text-align: center;
    color: ${(props) => props.$color || "#fff"};
`;

const Key = styled.button`
    height: ${(props) => props.$h || 15}px;
    width: ${(props) => (props.$w ? `${props.$w}px` : "auto")};
    display: grid;
    place-items: center;
    padding: 0;
    border: 1px solid #16181c;
    box-shadow: inset 1px 1px 0 #fff;
    background: ${(props) => (props.$red ? "#6c0c10" : "linear-gradient(#f8f8fa, #c4ccdc 45%, #fafafa 60%)")};
    color: ${(props) => (props.$red ? "#fff" : "#111")};
    font-family: ${(props) => (props.$arial ? '"Liberation Sans", sans-serif' : "inherit")};
    font-size: ${(props) => props.$fs || 9}px;
    font-weight: ${(props) => (props.$bold ? 700 : 400)};
    line-height: 10px;
    ${(props) => props.$red && "box-shadow: none;"}
`;

const KeyRow = styled.div`
    display: flex;
    flex: none;
    align-items: center;
    gap: ${(props) => props.$gap}px;
    padding: ${(props) => props.$pad || 0};
`;

const PlusMinus = styled.div`
    display: flex;
`;

const MasterGrid = styled.div`
    display: grid;
    grid-template-columns: 35px 1fr 35px;
    padding: 1px 2px 0 0;
`;

const FaderColumn = styled.div`
    display: flex;
    flex-direction: column;
    gap: 5px;
`;

const FaderBox = styled.div`
    display: grid;
    justify-items: center;
    height: 151px;
    padding-bottom: 3px;

    > * { grid-area: 1 / 1; }
`;

const Fader = styled.input`
    appearance: none;
    writing-mode: vertical-lr;
    direction: rtl;
    width: 18px;
    height: 148px;
    background: linear-gradient(#050505, #050505) center / 4px 148px no-repeat;

    &::-webkit-slider-thumb {
        appearance: none;
        width: 18px;
        height: 26px;
        background: ${(props) => (props.$orange
            ? "linear-gradient(#9c3038 0 3px, #b84438 3px 12px, #58504c 12px 14px, #d8562c 14px)"
            : "linear-gradient(#1c3c9c 0 7px, #2c5cc8 7px 12px, #0c1c8c 12px 14px, #2c7cd8 14px 24px, #30c8f0 24px 25px, #2c7cd8 25px)")};
    }
`;

const MidColumn = styled.div`
    display: flex;
    flex-direction: column;
    align-items: center;
    color: #fff;
`;

const ClipRow = styled.div`
    height: 15px;
    display: flex;
    align-items: center;
    gap: 5px;
`;

const MeterRow = styled.div`
    display: grid;
    grid-template-columns: 15px 20px 15px;
    margin-top: 1px;
`;

const Meter = styled.div`
    height: 152px;
    margin-top: 3px;
    border: solid;
    border-width: 1px 1px 1px 2px;
    border-color: #222 #ccc #ccc #222;
    background: repeating-linear-gradient(#8e9092 0 1px, #3c3e40 1px 2px);
`;

const Scale = styled.div`
    text-align: center;
    line-height: 10px;
`;

const ScaleMark = styled.div`
    height: ${(props) => props.$h}px;
`;

const Db = styled.div`
    height: 25px;
    padding-top: 6px;
`;

const Caption = styled.div`
    height: 17px;
    flex: none;
    padding-top: 1px;
    color: #e4e4e8;
    white-space: nowrap;
`;

const RenderStrip = styled.section`
    height: 28px;
    margin-top: -1px;
    display: flex;
    align-items: center;
    justify-content: space-between;
    padding: 0 5px 0 12px;
    background: #8e8f90;
    box-shadow: inset 2px 2px 0 #5c5d60, inset -1px -1px 0 #a8a8a8;
`;

const Brand = styled.div`
    display: flex;
    align-items: center;
    gap: 3px;
    font-family: "Liberation Sans", sans-serif;
    font-size: 13px;
    font-weight: 700;
    color: #d81830;
    text-shadow: 1px 1px 0 #70444c;
`;

/* ---------- data ---------- */

const mainTools = [
    ["page"], ["open", "save"], ["cut", "copy", "paste"], ["undo", "redo"], ["trash", "eraser"],
    ["speaker"], ["cascade", "tileV", "tileH", "arrange", "map"],
];

const editTools = ["ibeam", "speakerOff", "zoomOff", "pencil", "fadeIn", "fadeOut"];

const editTabs = [
    ["Edit", "tools", 55], ["Zoom", "lens", 60], ["Clips", "clips", 56], ["Groups", "tree", 71],
    ["Files", "files", 56], ["Markers", "markers", 74], ["Video", "video", 62], ["CD", "cd", 47],
    ["History", "undo", 69], ["Snapshots", "camera", 89], ["Notes", "notes", 63],
];

const trackTools = [
    ["envelope!", "trim!"], ["cross1!", "cross2", "cross3"], ["wave1", "wave2", "wave3"],
    ["shift1", "shift2"], ["tag!", "lock"], ["legL", "legR"], ["book"],
];

const rulerLabels = ["0 s", "200 ms", "", "", "", "", "", "", "1 s 600 ms", "1 s 800 ms"];

const scaleMarks = [["+6", 13], ["+2", 12], ["+1", 16], ["0.0", 20], ["-1", 30], ["-6", 54], ["-", 10]];

const faderTicks = [2, 5, 8, 11, 14, 17, 20, 23, 26, 33, 41, 51, 62, 77, 92, 117, 146];

const FaderStrip = ({ name, orange, children }) => (
    <FaderColumn>
        <Screen $h={15} $color="#f8f820">-96.0</Screen>
        <FaderBox>
            <svg width="33" height="148" aria-hidden="true">
                {faderTicks.map((y) => <path key={y} d={`M0 ${y}.5h12M21 ${y}.5h12`} stroke="#a4a6a8" />)}
            </svg>
            <Fader type="range" aria-label={name} defaultValue="67" $orange={orange} />
        </FaderBox>
        <Screen $h={15}>0.00</Screen>
        {children}
    </FaderColumn>
);

const ModuleTitle = ({ children }) => (
    <ModuleHead>
        <Led />
        <h2>{children}</h2>
        <Fold type="button" aria-label={`Fold ${children}`} />
    </ModuleHead>
);

const MasterRack = () => (
    <Rack>
        <Module>
            <ModuleTitle>Effects</ModuleTitle>
            <ModuleBody $h={219}>
                {[1, 2, 3, 4, 5, 6, 7, 8].map((n) => (
                    <Slot key={n}>
                        <SlotButtons>
                            <SlotKey type="button">ON</SlotKey>
                            <SlotKey type="button" $solo>SOLO</SlotKey>
                        </SlotButtons>
                        <Screen />
                        <Key type="button" $h={21} $bold $arial>{n}</Key>
                    </Slot>
                ))}
                <KeyRow $gap={10} $pad="2px 0 0 4px">
                    <Key type="button" $w={41}>Bypass</Key>
                    <Key type="button" $w={41}>Presets</Key>
                    <PlusMinus>
                        <Key type="button" $w={14} $fs={12} $bold>+</Key>
                        <Key type="button" $w={14} $fs={12} $bold>−</Key>
                    </PlusMinus>
                </KeyRow>
            </ModuleBody>
        </Module>
        <Module>
            <ModuleTitle>Master</ModuleTitle>
            <ModuleBody $h={219}>
                <MasterGrid>
                    <FaderStrip name="Left level">
                        <KeyRow><Key type="button" $w={25} $fs={8}>Mono</Key></KeyRow>
                    </FaderStrip>
                    <MidColumn>
                        <ClipRow><Led /><span>Clip</span><Led /></ClipRow>
                        <MeterRow>
                            <Meter />
                            <Scale>
                                {scaleMarks.map(([mark, h]) => <ScaleMark key={mark} $h={h}>{mark}</ScaleMark>)}
                            </Scale>
                            <Meter />
                        </MeterRow>
                        <Db>dB</Db>
                        <Key type="button" $w={31} $fs={8}>Unlink</Key>
                    </MidColumn>
                    <FaderStrip name="Right level" orange>
                        <Key type="button" $w={35} $fs={8} $red>Dropout</Key>
                    </FaderStrip>
                </MasterGrid>
            </ModuleBody>
        </Module>
        <Module>
            <ModuleTitle>Dithering</ModuleTitle>
            <ModuleBody $h={123}>
                <KeyRow $gap={4} $pad="1px 0 6px 0">
                    <Screen $h={20} $grow />
                    <Key type="button" $w={16} $h={20} aria-label="Dithering type"><Arrow dir="down" /></Key>
                </KeyRow>
                <KeyRow $gap={14}>
                    {["Off", "1", "2"].map((t) => <Key type="button" key={t} $w={24}>{t}</Key>)}
                </KeyRow>
                <Caption>Noise&nbsp; Type</Caption>
                <KeyRow $gap={14}>
                    {["Off", "1", "2", "3"].map((t) => <Key type="button" key={t} $w={24}>{t}</Key>)}
                </KeyRow>
                <Caption>Noise&nbsp; Shaping</Caption>
                <KeyRow $gap={14}>
                    {["8", "16", "20", "24"].map((t) => <Key type="button" key={t} $w={24}>{t}</Key>)}
                </KeyRow>
                <Caption>Output Bit Resolution</Caption>
            </ModuleBody>
        </Module>
        <RenderStrip>
            <Key type="button" $w={41} $fs={11} $arial>Render</Key>
            <Brand>
                <svg width="19" height="19" viewBox="0 0 19 19" aria-hidden="true">
                    <circle cx="9.500" cy="9.500" r="8" fill="#fff" stroke="#d81830" strokeWidth="2.500" />
                    <path d="M10 6v7l5-3.500z" fill="#111" />
                </svg>
                steinberg
            </Brand>
        </RenderStrip>
    </Rack>
);

const WaveWindow = () => (
    <Frame $x={0} $y={0} $w={1073} $h={696}>
        <FrameTitle $half>
            <Icon name="sine" />
            <TitleText as="h2">Untitled 1</TitleText>
            <Pins><DotPin /><RollPin /></Pins>
            <Controls><Ctl kind="Minimize" /><Ctl kind="Maximize" /><Ctl kind="Close" red /></Controls>
        </FrameTitle>
        <FrameBody>
            <WaveOverview>
                <svg width="18" height="88" viewBox="0 0 18 88" aria-hidden="true">
                    <path d="M0 14h18v12H0z" fill="#bcc0c4" />
                    <path d="M0 27h18v12H0z" fill="#e0e4e8" />
                    <path d="M.5 1v12M7.500 11v3M14.500 11v3M0 26.500h18M0 57.500h18M0 82.500h18M0 87.500h18" stroke="#000" fill="none" />
                    <text x="3" y="11" fontSize="9">0</text>
                    <path d="M0 43.500h18" stroke="#7a8a7a" />
                    <path d="M0 66h18" stroke="#000" strokeWidth="3" strokeDasharray="2 1" />
                    <path d="M1 69h15v12H1z" fill="#ebe9ed" stroke="#8d8d92" />
                    <path d="M10 72v6l-4-3z" fill="#a2a1a6" />
                </svg>
            </WaveOverview>
            <WaveMain>
                <AmpScale>-100</AmpScale>
                <WaveCanvas />
                <VScroll>
                    <ScrollButton type="button" aria-label="Scroll down"><Arrow dir="down" color={G} /></ScrollButton>
                </VScroll>
            </WaveMain>
            <ScrollRow>
                <ScrollButton type="button" aria-label="Scroll left"><Arrow dir="left" color={G} /></ScrollButton>
                <ScrollTrack />
                <ScrollButton type="button" aria-label="Scroll right"><Arrow dir="right" color={G} /></ScrollButton>
                <ZoomBox $w={84} $pr={10}>
                    <Arrow dir="left" />
                    <ZoomRange type="range" aria-label="Zoom" defaultValue="8" />
                    <Arrow dir="right" />
                </ZoomBox>
                <Grip />
            </ScrollRow>
        </FrameBody>
    </Frame>
);

const MontageWindow = () => (
    <Frame $x={22} $y={29} $w={1073} $h={607}>
        <FrameTitle>
            <Icon name="montage" />
            <TitleText as="h2" $active>Untitled 2 *</TitleText>
            <Pins><DotPin /><RollPin /></Pins>
            <Controls><Ctl kind="Minimize" /><Ctl kind="Maximize" /><Ctl kind="Close" red /></Controls>
        </FrameTitle>
        <FrameBody>
            <EditTabs>
                {editTabs.map(([label, icon, w], i) => (
                    <EditTab type="button" key={label} $w={w} $active={i === 0}>
                        <Icon name={icon} /><span>{label}</span>
                    </EditTab>
                ))}
            </EditTabs>
            <EditMenu>
                <MenuWords>
                    {["Mode", "Special", "Select", "Fade", "Options", "All-Tracks"].map((word) => (
                        <MenuItem type="button" key={word} $small>{word}</MenuItem>
                    ))}
                </MenuWords>
                {trackTools.map((group) => [
                    <Divider key={`d-${group[0]}`} $m={9} $h={15} />,
                    ...group.map((tool) => (
                        <ToolButton type="button" key={tool} $wide $on={tool.endsWith("!")} aria-label={tool.replace("!", "")}>
                            <Icon name={tool.replace("!", "")} size={tool === "book" ? 19 : 17} />
                        </ToolButton>
                    )),
                ])}
            </EditMenu>
            <Overview><OverviewRange /></Overview>
            <Splitter />
            <RulerRow>
                <RulerTools>
                    <Icon name="arrL" size={12} />
                    <Icon name="arrR" size={12} />
                    <Icon name="spread" size={14} />
                    <Icon name="zoomSel" size={12} />
                </RulerTools>
                <Ruler>
                    {rulerLabels.map((label, i) => <RulerPart key={i}>{label || "\u00a0"}<Ticks /></RulerPart>)}
                </Ruler>
            </RulerRow>
            <TrackRow>
                <TrackHead>
                    <TrackControls>
                        <TrackIcons>
                            <SmallTrackButton type="button" aria-label="Track menu"><Arrow dir="down" /></SmallTrackButton>
                            <Icon name="diamond" size={13} />
                            <Icon name="ball" size={13} />
                        </TrackIcons>
                        <PickBox $w={43}>
                            <Pick aria-label="Track effects"><option>no fx</option></Pick>
                            <Arrow dir="down" />
                        </PickBox>
                        <PickBox $w={35}>
                            <Pick aria-label="Track number" $indent={5}><option>1</option></Pick>
                            <Arrow dir="down" />
                        </PickBox>
                        <span>Lf : Rf</span>
                    </TrackControls>
                    <MeterPair><i /><i /></MeterPair>
                </TrackHead>
                <TrackCanvas />
            </TrackRow>
            <Footer>
                <FooterStrip />
                <ScrollRow>
                    <ScrollTrack><ScrollThumb /></ScrollTrack>
                    <ScrollButton type="button" aria-label="Scroll left"><Arrow dir="left" color={G} /></ScrollButton>
                    <ScrollButton type="button" aria-label="Scroll right"><Arrow dir="right" /></ScrollButton>
                    <ZoomBox $w={116}>
                        <Arrow dir="left" />
                        <ZoomRange type="range" aria-label="Zoom" defaultValue="12" />
                    </ZoomBox>
                </ScrollRow>
            </Footer>
        </FrameBody>
    </Frame>
);

const BatchDialog = () => (
    <Frame $x={280} $y={229} $w={586} $h={400} role="dialog" aria-label="Batch Processing">
        <FrameTitle>
            <Icon name="logo" />
            <TitleText as="h2" $active>Batch Processing</TitleText>
            <Pins><RollPin /></Pins>
            <Ctl kind="Close" red />
        </FrameTitle>
        <FrameBody>
            <Tabs>
                <Tab type="button" $w={130}><Icon name="files" /><span>Input</span></Tab>
                <Tab type="button" $w={138} $active><Icon name="floppy" /><span>Output</span></Tab>
                <Tab type="button" $w={154}><Icon name="clock" /><span>Schedule</span></Tab>
                <Tab type="button" $w={143}><Icon name="presets" /><span>Presets</span></Tab>
            </Tabs>
            <Panel>
                <Column $gap={4}>
                    <Group $h={126} $pad="3px 7px 0 8px">
                        <Legend>Output File Names</Legend>
                        <FieldLabel htmlFor="dest">Destination folder</FieldLabel>
                        <FieldRow>
                            <TextBox id="dest" defaultValue="C:\Softpedia" />
                            <SmallButton type="button" $w={25} aria-label="Browse"><Icon name="folder" /></SmallButton>
                            <SmallButton type="button" $w={15} aria-label="Recent folders"><Arrow dir="right" /></SmallButton>
                        </FieldRow>
                        <Rule />
                        <FieldRow $mb={3}>
                            <label htmlFor="prefix">File name prefix</label>
                            <TextBox id="prefix" $w={131} defaultValue="Softpedia Test" />
                            <SmallButton type="button" $w={15} $focus aria-label="Prefix presets"><Arrow dir="right" /></SmallButton>
                        </FieldRow>
                        <FieldRow>
                            <label htmlFor="suffix">File name suffix</label>
                            <TextBox id="suffix" $w={131} defaultValue="" />
                            <SmallButton type="button" $w={15} aria-label="Suffix presets"><Arrow dir="right" /></SmallButton>
                        </FieldRow>
                    </Group>
                    <Group $h={99} $pad="3px 4px 0 8px">
                        <Legend $tight>
                            <CheckLabel $gap={17} $h={16}><Check type="checkbox" />Archive Output Files</CheckLabel>
                        </Legend>
                        <FieldLabel htmlFor="zip" $off>ZIP file name</FieldLabel>
                        <FieldRow>
                            <TextBox id="zip" disabled defaultValue="" />
                            <SmallButton type="button" $w={25} disabled aria-label="Browse archive"><Icon name="folderOff" /></SmallButton>
                        </FieldRow>
                        <Indent>
                            <CheckLabel $off><Check type="checkbox" disabled defaultChecked />Save path information</CheckLabel>
                            <CheckLabel $off><Check type="checkbox" disabled />Move (erase) output files</CheckLabel>
                        </Indent>
                    </Group>
                </Column>
                <Column $gap={5}>
                    <Group $h={60}>
                        <Legend>Options</Legend>
                        <CheckLabel><Check type="checkbox" />Create backups</CheckLabel>
                        <CheckLabel><Check type="checkbox" />Delete files after process</CheckLabel>
                    </Group>
                    <Group $h={86} $pad="4px 6px 0 9px">
                        <Legend>Output Format</Legend>
                        <FormatRow>
                            <FormatButton type="button">Wave (PCM) / Attr: Untitled</FormatButton>
                            <FormatButton type="button" $arrow aria-label="Format menu"><Arrow dir="down" /></FormatButton>
                        </FormatRow>
                    </Group>
                </Column>
            </Panel>
            <Actions>
                <ActionButton type="button" disabled><Icon name="tick" size={18} />Run</ActionButton>
                <ActionButton type="button"><Icon name="door" />Close</ActionButton>
                <ActionButton type="button"><Icon name="book" size={20} />Help</ActionButton>
            </Actions>
        </FrameBody>
        <Corner><Grip /></Corner>
    </Frame>
);

const App = () => (
    <>
        <GlobalStyle />
        <Shell>
            <AppTitle>
                <Icon name="logo" size={17} />
                <TitleText>Untitled 2 - WaveLab Demo (DEMO)</TitleText>
                <Controls><Ctl kind="Minimize" /><Ctl kind="Restore" /><Ctl kind="Close" /></Controls>
            </AppTitle>
            <Watermark>
                SOFTPEDIA
                <WatermarkUrl>www.softpedia.com</WatermarkUrl>
            </Watermark>
            <MenuBar>
                {["File", "Edit", "View", "Analysis", "Sampling", "Tools", "Options", "Window", "Help"].map((item) => (
                    <MenuItem type="button" key={item} disabled>{item}</MenuItem>
                ))}
            </MenuBar>
            <ToolBar>
                <ToolGroup>
                    <Handle />
                    {mainTools.map((group, i) => [
                        i > 0 && <Divider key={`d-${group[0]}`} />,
                        ...group.map((tool) => (
                            <ToolButton type="button" key={tool} aria-label={tool}><Icon name={tool} /></ToolButton>
                        )),
                    ])}
                </ToolGroup>
                <ToolGroup>
                    <Handle />
                    {editTools.map((tool) => (
                        <ToolButton type="button" key={tool} disabled aria-label={tool}><Icon name={tool} /></ToolButton>
                    ))}
                </ToolGroup>
            </ToolBar>
            <Workspace>
                <WaveWindow />
                <MontageWindow />
                <BatchDialog />
                <MasterRack />
            </Workspace>
            <DocTabs>
                <DocTab type="button">Untitled 1</DocTab>
                <DocTab type="button" $active>Untitled 2 *</DocTab>
            </DocTabs>
            <StatusBar>
                <StatusCell $fill />
                <StatusCell>&gt; 0 s</StatusCell>
                <StatusCell>0 s</StatusCell>
                <StatusCell>x 1: 91</StatusCell>
                <StatusCell>44 100 Hz</StatusCell>
            </StatusBar>
            <TaskEdge />
        </Shell>
    </>
);

export default App;
